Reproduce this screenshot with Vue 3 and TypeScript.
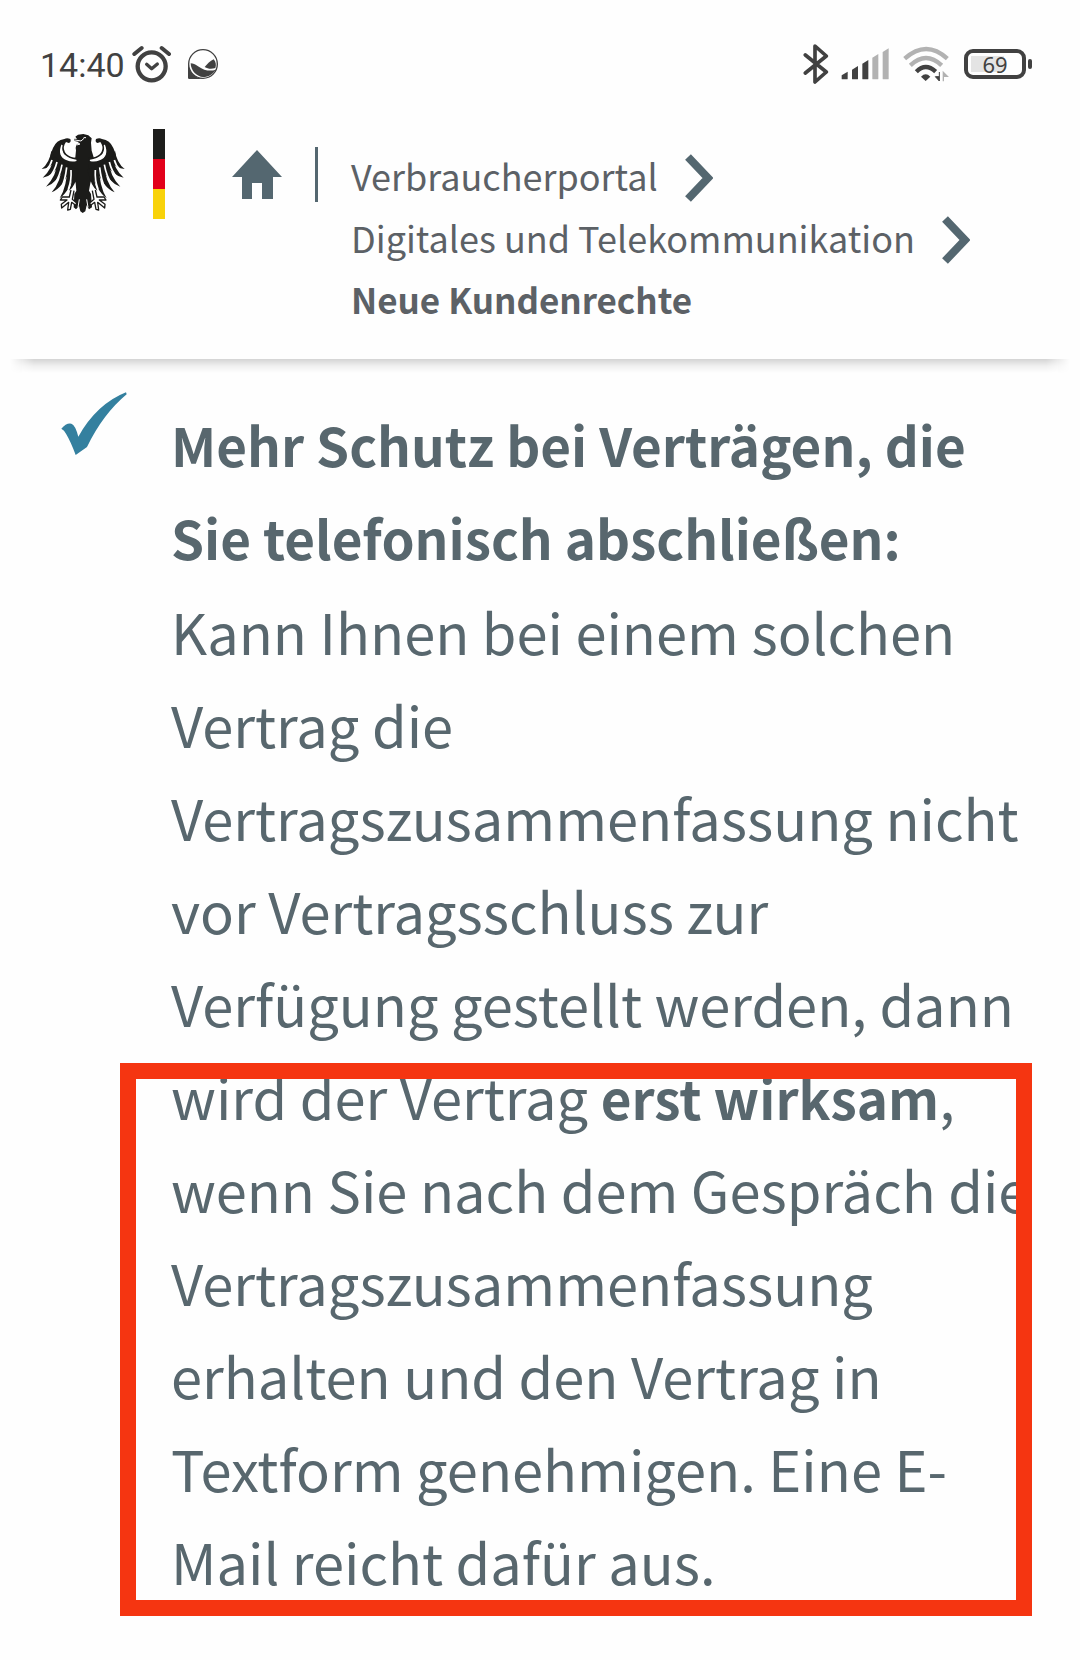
<script setup lang="ts">
interface Crumb {
  label: string
  current?: boolean
}

const crumbs: Crumb[] = [
  { label: 'Verbraucherportal' },
  { label: 'Digitales und Telekommunikation' },
  { label: 'Neue Kundenrechte', current: true },
]

const headingLines: string[] = ['Mehr Schutz bei Verträgen, die', 'Sie telefonisch abschließen:']

const introLines: string[] = [
  'Kann Ihnen bei einem solchen',
  'Vertrag die',
  'Vertragszusammenfassung nicht',
  'vor Vertragsschluss zur',
  'Verfügung gestellt werden, dann',
]

const markedLines: string[] = [
  'wenn Sie nach dem Gespräch die',
  'Vertragszusammenfassung',
  'erhalten und den Vertrag in',
  'Textform genehmigen. Eine E-',
  'Mail reicht dafür aus.',
]

// The eagle is symmetric below the head: the right wing and claw mirror the left ones.
const eagleSides: string[] = ['', 'translate(317 0) scale(-1 1)']
</script>

<template>
  <div class="page">
    <header class="top">
      <div class="status">
        <span class="clock">14:40</span>
        <svg class="alarm" width="40" height="38" viewBox="0 0 120 114" fill="none" stroke="#414141">
          <circle cx="59" cy="64" r="42" stroke-width="13" />
          <path d="M7 27 29 9M89 9l22 18" stroke-width="12" stroke-linecap="round" />
          <path d="m44 58 15 13 17-14" stroke-width="10" stroke-linecap="round" stroke-linejoin="round" />
        </svg>
        <svg class="app" width="30" height="30" viewBox="0 0 90 90">
          <path d="M0 45v41q0 4 4 4h41z" fill="#414141" />
          <circle cx="45" cy="45" r="43" fill="#fefefe" stroke="#414141" stroke-width="4" />
          <path d="M8 43c15 1 24 13 41 19 13 4 25 3 34 0-8 13-21 22-38 22S8 66 8 43z" fill="#414141" />
          <path d="M50 54c8-9 16-18 27-23 7 8 8 17 5 26-12 4-22 3-32-3z" fill="#414141" />
        </svg>
        <div class="system">
          <svg width="26" height="40" viewBox="0 0 78 120" fill="none" stroke="#414141" stroke-width="11" stroke-linejoin="round" stroke-linecap="round">
            <path d="m7 33 63 51-34 30V6l34 30L7 87" />
          </svg>
          <svg class="signal" width="48" height="32" viewBox="0 0 144 96">
            <g fill="#414141">
              <path d="M2 82 20 71v21q0 2-2 2H4q-2 0-2-2z" />
              <path d="m33 65 18-11v38q0 2-2 2H35q-2 0-2-2z" />
              <path d="m64 47 18-11v56q0 2-2 2H66q-2 0-2-2z" />
            </g>
            <g fill="#b2b2b2">
              <path d="m94 29 18-11v74q0 2-2 2H96q-2 0-2-2z" />
              <path d="m125 12 18-11v91q0 2-2 2h-14q-2 0-2-2z" />
            </g>
          </svg>
          <svg class="wifi" width="46" height="36" viewBox="0 0 138 108" fill="none" stroke-width="13">
            <path d="M5 38q65-58 128 0" stroke="#b2b2b2" />
            <path d="M22 58q47-44 94 0" stroke="#b2b2b2" />
            <path d="M40 77q28-28 58 0" stroke="#414141" />
            <path d="M54 92q14-14 28 0L68 105z" fill="#414141" />
            <path d="M109 78v27L97 92h12" fill="#414141" stroke="#414141" stroke-width="3" />
            <path d="M121 106V79l12 12h-12" fill="#b2b2b2" stroke="#b2b2b2" stroke-width="4" />
          </svg>
          <div class="battery"><span class="level">69</span></div>
        </div>
      </div>

      <div class="brand-row">
        <a class="brand" href="#" aria-label="Bundesregierung">
          <svg width="84" height="80" viewBox="32 42 252 240">
            <path
              d="M137 91Q133 76 146 66L133 63 132 56 140 57 135 50 143 44 159 42 174 46 184 55 182 68 184 92 190 112 189 130 192 150 180 190 176 212 182 222 185 262 176 268 169 256 165 274 157 279 150 274 146 258 137 268 130 262 132 222 138 212 136 190 122 150 130 130 135 112Z"
              fill="#1b1b19"
            />
            <path d="m134 60 18 3 9-8M137 69l12 3-10 3M160 53h7" fill="none" stroke="#fff" stroke-width="3" />
            <path d="M143 262 147 238M173 262 169 238" stroke="#fff" stroke-width="3" />
            <g v-for="side in eagleSides" :key="side" :transform="side || undefined">
              <g fill="#1b1b19">
                <path d="M120 57Q110 52 102 57 78 60 68 84 62 98 60 108L88 130 124 150 142 145 142 113Q120 114 108 102 96 88 103 73L107 66 115 69Q124 66 120 57Z" />
                <path d="M63 92Q58 128 34 147 60 145 78 122Z" />
                <path d="M72 108Q64 150 37 173 68 168 94 128Z" />
                <path d="M84 118Q78 170 47 200 82 189 108 136Z" />
                <path d="M98 126Q92 186 64 217 98 204 121 144Z" />
                <path d="M112 134Q110 200 88 235 120 212 134 150Z" />
                <path d="M124 140Q130 180 116 212 134 202 146 150Z" />
              </g>
              <path d="M95 75Q82 108 110 119 124 125 138 121 115 119 102 106 90 92 95 75Z" fill="#fff" stroke="#fff" stroke-width="4" />
              <path
                d="M65 120Q60 138 49 148M80 126Q73 155 56 173M95 134Q89 168 73 191M109 142Q105 180 92 206M122 150Q124 182 114 207"
                fill="none"
                stroke="#fff"
                stroke-width="5"
              />
              <path
                d="M122 210 117 231 96 231 90 240 110 240 93 253 94 264 115 247 112 270 120 268 124 247 136 256 139 249 126 238 131 212"
                fill="#fff"
                stroke="#1b1b19"
                stroke-width="4"
                stroke-linejoin="round"
              />
            </g>
          </svg>
          <span class="flag"><i class="black"></i><i class="red"></i><i class="gold"></i></span>
        </a>
        <a class="home" href="#" aria-label="Startseite">
          <svg width="50" height="50" viewBox="0 0 50 50"><path d="m25 0 25 27h-9v22H30V33H20v16H10V27H0z" fill="#546770" /></svg>
        </a>
        <nav class="crumbs" aria-label="Brotkrumen">
          <div v-for="c in crumbs" :key="c.label" class="crumb">
            <strong v-if="c.current">{{ c.label }}</strong>
            <template v-else>
              <a href="#">{{ c.label }}</a>
              <svg width="28" height="48" viewBox="0 0 28 48"><path d="m3 3 20 21L3 45" fill="none" stroke="#546770" stroke-width="8" /></svg>
            </template>
          </div>
        </nav>
      </div>
    </header>

    <main class="item">
      <svg class="tick" width="66" height="64" viewBox="0 0 198 192">
        <path d="M1 110q15-18 30-15 12 4 21 39Q107 36 195 1l2 6Q126 66 78 165l-34 24q-14-39-29-64-5-11-14-15z" fill="#34809f" />
      </svg>
      <div class="copy">
        <h1><span v-for="l in headingLines" :key="l" class="line">{{ l }}</span></h1>
        <p>
          <span v-for="l in introLines" :key="l" class="line">{{ l }}</span>
          <span class="marked">
            <span class="line">wird der Vertrag <b>erst wirksam</b>,</span>
            <span v-for="l in markedLines" :key="l" class="line">{{ l }}</span>
          </span>
        </p>
      </div>
    </main>
  </div>
</template>

<style>
body {
  margin: 0;
  background: #fefefe;
}
</style>

<style scoped>
.page {
  font-family: "Noto Sans CJK SC", "Noto Sans", sans-serif;
  color: #58676e;
  overflow: hidden;
  padding-bottom: 48px;
}
.top {
  position: relative;
  box-sizing: border-box;
  min-height: 359px;
  padding-top: 44px;
}
.top::after {
  content: "";
  position: absolute;
  left: 10px;
  right: 10px;
  top: 100%;
  height: 14px;
  background: linear-gradient(#d4d4d4, #f0f0f0 50%, #fefefe);
  mask-image: linear-gradient(90deg, transparent, #000 24px, #000 calc(100% - 24px), transparent);
}
.status {
  display: flex;
  align-items: center;
  height: 40px;
  padding: 0 48px 0 40px;
  color: #414141;
}
.clock {
  padding-top: 2px;
  font: 34px/40px Roboto, sans-serif;
}
.alarm {
  margin-left: 7px;
}
.app {
  margin-left: 16px;
}
.system {
  display: flex;
  align-items: center;
  margin-left: auto;
}
.signal {
  margin-left: 12px;
}
.wifi {
  margin-left: 14px;
}
.battery {
  position: relative;
  box-sizing: border-box;
  width: 62px;
  height: 30px;
  margin: 0 6px 0 15px;
  border: 4px solid #414141;
  border-radius: 9px;
  padding: 3px;
}
.battery::after {
  content: "";
  position: absolute;
  right: -10px;
  top: 6px;
  width: 4px;
  height: 10px;
  border-radius: 2px;
  background: #414141;
}
.level {
  display: block;
  background: linear-gradient(90deg, #e4e4e4 69%, transparent 69%);
  font: 22px/16px "Noto Sans", sans-serif;
  text-align: center;
}
.brand-row {
  display: flex;
  align-items: flex-start;
  padding: 45px 40px 0 41px;
}
.brand {
  display: flex;
  gap: 28px;
}
.brand svg {
  margin-top: 5px;
}
.flag {
  display: flex;
  flex-direction: column;
  width: 12px;
}
.flag i {
  height: 30px;
}
.black {
  background: #1d1d1b;
}
.red {
  background: #e2001a;
}
.gold {
  background: #f8d20a;
}
.home {
  margin: 21px 0 0 67px;
}
.home svg {
  display: block;
}
.crumbs {
  position: relative;
  margin: 15px 0 0 33px;
  padding-left: 36px;
  font-size: 36px;
  line-height: 62px;
  color: #5c6166;
  white-space: nowrap;
}
.crumbs::before {
  content: "";
  position: absolute;
  left: 0;
  top: 3px;
  width: 3px;
  height: 55px;
  background: #546770;
}
.crumb {
  display: flex;
  align-items: center;
  gap: 27px;
  height: 62px;
}
.crumb svg {
  margin-top: 6px;
}
.crumb a {
  color: inherit;
  text-decoration: none;
}
.crumb strong {
  font-size: 35px;
}
.item {
  display: flex;
  align-items: flex-start;
  padding: 33px 48px 0 61px;
}
.tick {
  flex: none;
}
.copy {
  flex: 1;
  min-width: 0;
  margin: 6px 0 0 44px;
  font-size: 56px;
  line-height: 93px;
}
h1,
p {
  margin: 0;
}
h1,
b {
  font-size: 53px;
}
b {
  line-height: 1;
}
.line {
  display: block;
  white-space: nowrap;
}
.marked {
  display: block;
  position: relative;
}
.marked::after {
  content: "";
  position: absolute;
  inset: 14px 0 -9px -51px;
  border: 16px solid #f53511;
}
</style>
